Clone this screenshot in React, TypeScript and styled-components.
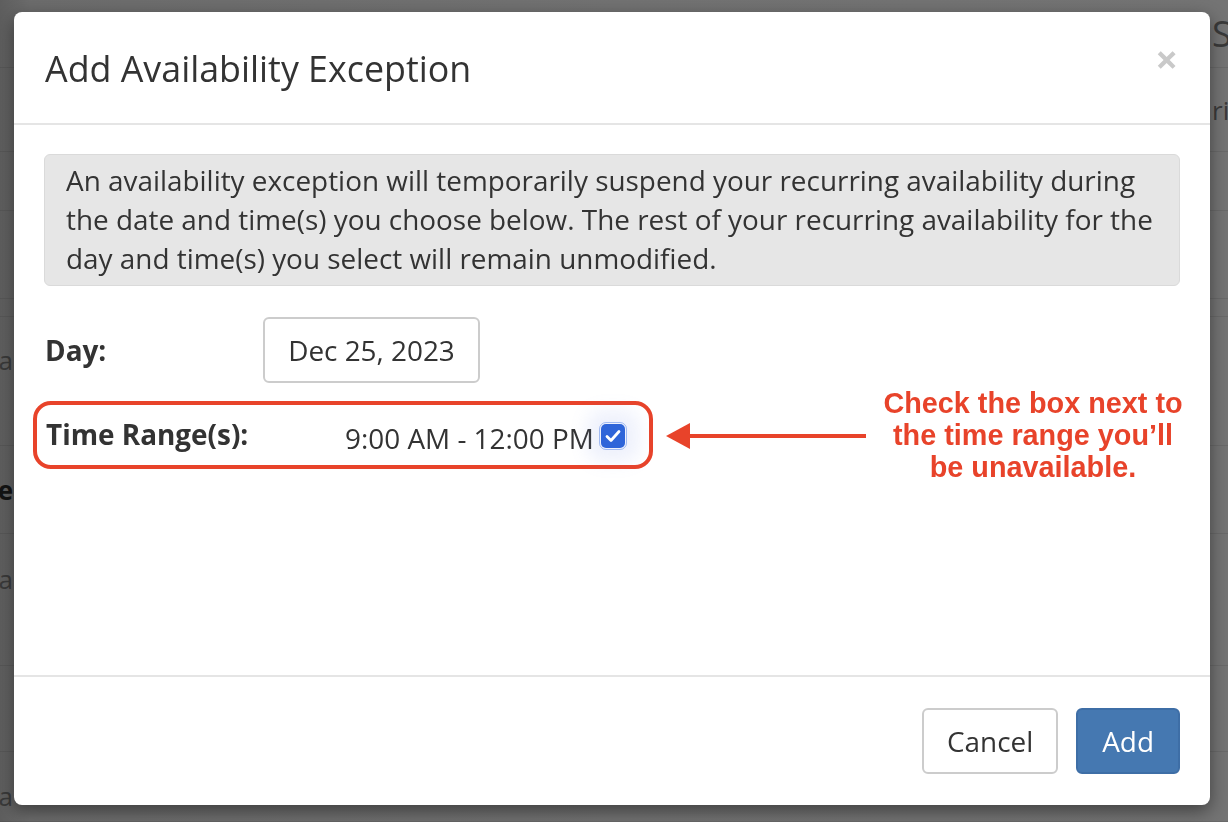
import React from 'react'
import styled, { createGlobalStyle } from 'styled-components'

const GlobalStyle = createGlobalStyle`
  html, body {
    margin: 0;
    padding: 0;
    height: 100%;
  }
  body {
    background: #717171;
    font-family: 'Open Sans', 'Noto Sans', sans-serif;
    overflow: hidden;
  }
  #root {
    height: 100%;
  }
`

// dimmed page that sits behind the modal
const Page = styled.div`
  height: 822px;
  display: flex;
  flex-direction: column;
  background: linear-gradient(90deg, #5e5e5e 0, #6c6c6c 30px, #727272 50%, #747474 100%);
`

const PageRow = styled.div<{ $h: number }>`
  height: ${p => p.$h}px;
  flex: none;
  display: flex;
  border-bottom: 1px solid rgba(0, 0, 0, 0.08);
  box-sizing: border-box;
`

const SideCell = styled.div<{ $side: 'left' | 'right'; $bold?: boolean; $size?: number; $top?: number }>`
  width: ${p => (p.$side === 'left' ? 13 : 16)}px;
  margin-left: ${p => (p.$side === 'right' ? 'auto' : '0')};
  display: flex;
  justify-content: ${p => (p.$side === 'left' ? 'flex-end' : 'flex-start')};
  align-items: ${p => (p.$top !== undefined ? 'flex-start' : 'center')};
  padding-top: ${p => p.$top ?? 0}px;
  box-sizing: border-box;
  overflow: hidden;
  white-space: nowrap;
  font-size: ${p => p.$size ?? 26}px;
  font-weight: ${p => (p.$bold ? 700 : 400)};
  color: ${p => (p.$bold ? '#141414' : '#3a3a3a')};
`

const Overlay = styled.div`
  position: fixed;
  inset: 0;
  display: flex;
  align-items: flex-start;
  padding: 12px 18px 0 14px;
`

const Modal = styled.div`
  width: 1196px;
  height: 793px;
  background: #fff;
  border-radius: 8px;
  box-shadow: 0 6px 18px rgba(0, 0, 0, 0.45);
  display: flex;
  flex-direction: column;
  color: #333;
`

const Header = styled.div`
  height: 111px;
  flex: none;
  display: flex;
  justify-content: space-between;
  align-items: center;
  padding: 0 32px 0 31px;
  border-bottom: 2px solid #e5e5e5;
`

const Title = styled.h4`
  margin: 0;
  font-size: 35.8px;
  font-weight: 400;
  line-height: 1.3;
  color: #333;
  padding-top: 1px;
`

const CloseButton = styled.button`
  border: 0;
  background: none;
  padding: 0;
  margin-top: -18px;
  font-family: 'Open Sans', sans-serif;
  font-size: 40px;
  font-weight: 700;
  line-height: 1;
  color: #c9c9c9;
  cursor: pointer;
`

const Body = styled.div`
  flex: 1;
  padding: 29px 30px 0 30px;
  border-bottom: 2px solid #e5e5e5;
`

const Notice = styled.div`
  background: #e6e6e6;
  border: 1px solid #dadada;
  border-radius: 6px;
  padding: 6px 21px 7px 21px;
  font-size: 27.9px;
  line-height: 39px;
  color: #333;
`

const FieldRow = styled.div`
  display: flex;
  align-items: center;
  margin-top: 31px;
`

const Label = styled.div`
  width: 218px;
  flex: none;
  padding-left: 1px;
  font-size: 27.9px;
  font-weight: 700;
  color: #333;
`

const DateBox = styled.div`
  width: 217px;
  height: 66px;
  box-sizing: border-box;
  border: 2px solid #cccccc;
  border-radius: 6px;
  display: flex;
  align-items: center;
  justify-content: center;
  font-size: 27.9px;
  color: #333;
`

const CalloutRow = styled.div`
  display: flex;
  align-items: flex-start;
  margin-top: 18px;
`

const Highlight = styled.div`
  width: 620px;
  height: 68px;
  flex: none;
  box-sizing: border-box;
  margin-left: -11px;
  border: 4px solid #e8432a;
  border-radius: 18px;
  display: flex;
  align-items: center;
  padding-left: 8px;
`

const HighlightLabel = styled(Label)`
  width: 299px;
  margin-top: -3px;
`

const TimeOption = styled.label`
  display: flex;
  align-items: center;
  gap: 7px;
  margin-top: 5px;
  font-size: 27.9px;
  color: #333;
`

const CheckMark = styled.span`
  width: 24px;
  height: 24px;
  flex: none;
  border-radius: 5px;
  background: #2f65d9;
  display: flex;
  align-items: center;
  justify-content: center;
  margin-top: -4px;
  outline: 1px solid rgba(110, 150, 235, 0.6);
  outline-offset: 1px;
  box-shadow: 0 0 18px 14px rgba(120, 150, 230, 0.13);
`

const Arrow = styled.svg`
  margin: 21px 0 0 13px;
  flex: none;
`

const CalloutText = styled.div`
  flex: none;
  margin: -14px 0 0 12px;
  width: 310px;
  text-align: center;
  font-family: 'Liberation Sans', Arial, sans-serif;
  font-weight: 700;
  font-size: 28.8px;
  line-height: 32px;
  color: #e8432a;
`

const Footer = styled.div`
  height: 128px;
  flex: none;
  display: flex;
  justify-content: flex-end;
  align-items: flex-start;
  gap: 18px;
  padding: 31px 30px 0 0;
  box-sizing: border-box;
`

const Button = styled.button<{ $primary?: boolean }>`
  height: 66px;
  padding: 0 ${p => (p.$primary ? 24 : 23)}px;
  border-radius: 6px;
  border: 2px solid ${p => (p.$primary ? '#3e6ea6' : '#cccccc')};
  background: ${p => (p.$primary ? '#4578b1' : '#fff')};
  color: ${p => (p.$primary ? '#fff' : '#333')};
  font-family: 'Open Sans', sans-serif;
  font-size: 27.9px;
  cursor: pointer;
`

const pageRows: { h: number; left?: string; leftBold?: boolean; leftTop?: number; right?: string; rightSize?: number }[] = [
  { h: 68, right: 'Se', rightSize: 36 },
  { h: 84, right: 'ri' },
  { h: 59 },
  { h: 88 },
  { h: 18 },
  { h: 129, left: 'na', leftTop: 25 },
  { h: 88, left: 'Are', leftBold: true },
  { h: 132, left: 'na', leftTop: 27 },
  { h: 86 },
  { h: 70, left: 'na', leftTop: 26 },
]

export default function App() {
  return (
    <>
      <GlobalStyle />
      <Page>
        {pageRows.map((row, i) => (
          <PageRow key={i} $h={row.h}>
            <SideCell $side="left" $bold={row.leftBold} $top={row.leftTop}>
              {row.left}
            </SideCell>
            <SideCell $side="right" $size={row.rightSize}>
              {row.right}
            </SideCell>
          </PageRow>
        ))}
      </Page>
      <Overlay>
        <Modal>
          <Header>
            <Title>Add Availability Exception</Title>
            <CloseButton aria-label="Close">×</CloseButton>
          </Header>
          <Body>
            <Notice>
              An availability exception will temporarily suspend your recurring availability during the date and time(s)
              you choose below. The rest of your recurring availability for the day and time(s) you select will remain
              unmodified.
            </Notice>
            <FieldRow>
              <Label>Day:</Label>
              <DateBox>Dec 25, 2023</DateBox>
            </FieldRow>
            <CalloutRow>
              <Highlight>
                <HighlightLabel>Time Range(s):</HighlightLabel>
                <TimeOption>
                  9:00 AM - 12:00 PM
                  <CheckMark>
                    <svg width="16" height="14" viewBox="0 0 16 14">
                      <path d="M2 7.5 L6 11.5 L14 2.5" fill="none" stroke="#fff" strokeWidth="2.8" strokeLinecap="round" strokeLinejoin="round" />
                    </svg>
                  </CheckMark>
                </TimeOption>
              </Highlight>
              <Arrow width="200" height="28" viewBox="0 0 200 28">
                <path d="M0 14 L24 1 L24 27 Z" fill="#e8432a" />
                <rect x="20" y="12" width="180" height="4" fill="#e8432a" />
              </Arrow>
              <CalloutText>
                Check the box next to
                <br />
                the time range you’ll
                <br />
                be unavailable.
              </CalloutText>
            </CalloutRow>
          </Body>
          <Footer>
            <Button>Cancel</Button>
            <Button $primary>Add</Button>
          </Footer>
        </Modal>
      </Overlay>
    </>
  )
}
